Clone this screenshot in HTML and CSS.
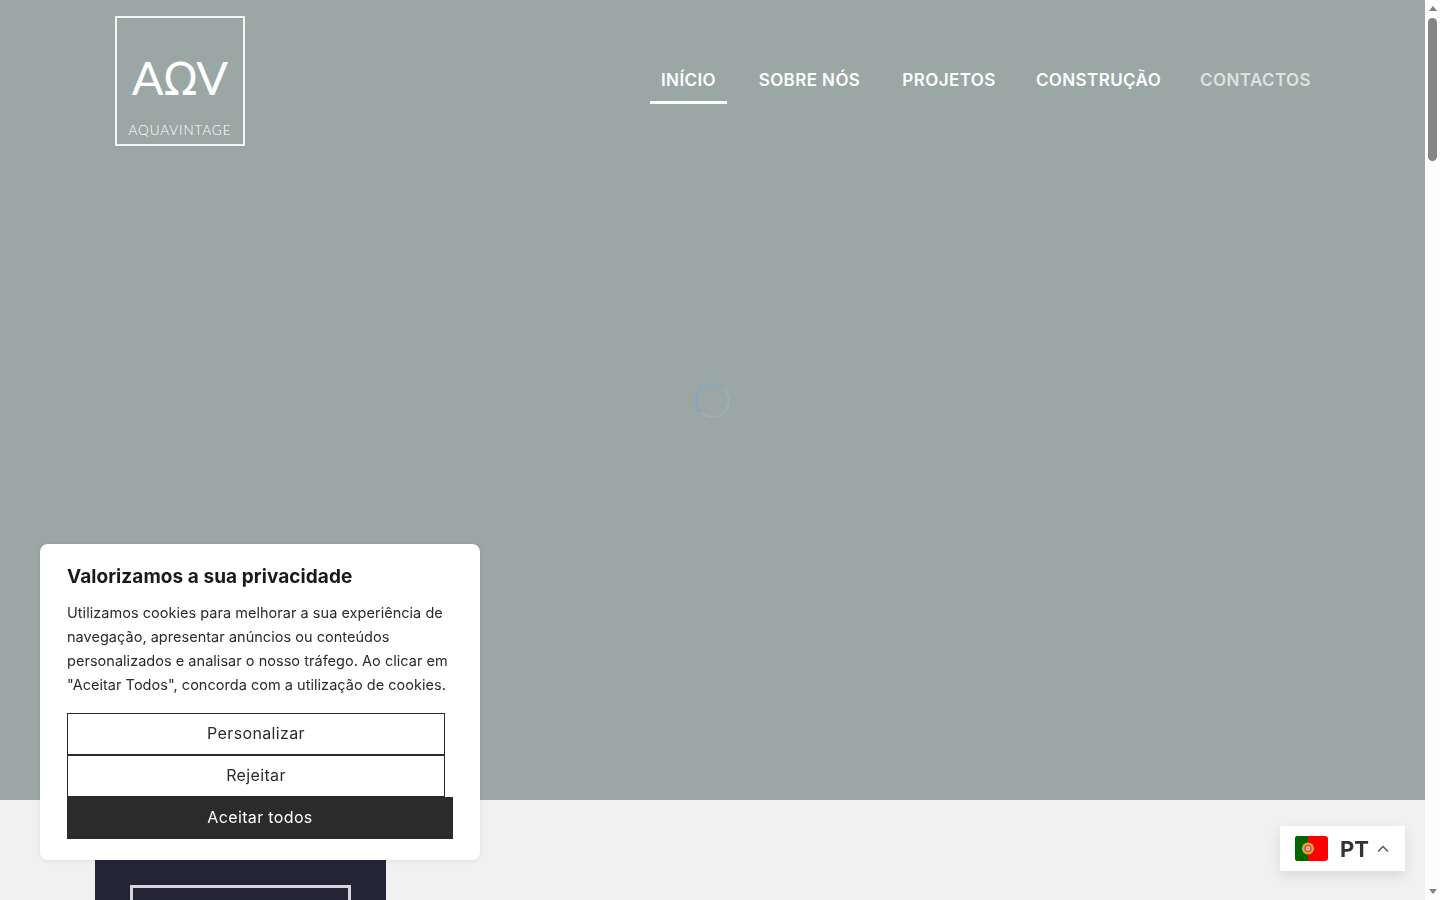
FILE: index.html
```html
<!DOCTYPE html>
<html lang="pt-PT">
<head>
  <meta charset="UTF-8"/>
  <meta name="viewport" content="width=device-width,initial-scale=1"/>
  <title>Aquavintage</title>
  <link rel="stylesheet" href="styles.css">
</head>
<body>
  <div class="page">
    <main class="content">
      <section class="hero">
        <header class="topbar">
          <a class="logo" href="#">
            <span class="logo-mark">A<span class="logo-q">Ω</span>V</span>
            <span class="logo-name">AQUAVINTAGE</span>
          </a>
          <nav class="menu">
            <a class="active" href="#">INÍCIO</a>
            <a href="#">SOBRE NÓS</a>
            <a href="#">PROJETOS</a>
            <a href="#">CONSTRUÇÃO</a>
            <a class="dim" href="#">CONTACTOS</a>
          </nav>
        </header>
        <div class="hero-center">
          <div class="spinner"></div>
        </div>
      </section>
      <section class="below">
        <div class="thumb"><div class="thumb-frame"></div></div>
      </section>
    </main>

    <!-- barra de scroll -->
    <aside class="scrollbar">
      <span class="arrow up"></span>
      <span class="thumb-bar"></span>
      <span class="arrow down"></span>
    </aside>
  </div>

  <div class="cookies">
    <h2>Valorizamos a sua privacidade</h2>
    <p>Utilizamos cookies para melhorar a sua experiência de navegação, apresentar anúncios ou conteúdos personalizados e analisar o nosso tráfego. Ao clicar em "Aceitar Todos", concorda com a utilização de cookies.</p>
    <div class="cookie-btns">
      <button class="btn">Personalizar</button>
      <button class="btn">Rejeitar</button>
      <button class="btn accept">Aceitar todos</button>
    </div>
  </div>

  <div class="lang">
    <svg class="flag" width="33" height="25" viewBox="0 0 33 25">
      <defs><clipPath id="flagclip"><rect width="33" height="25" rx="3"/></clipPath></defs>
      <g clip-path="url(#flagclip)">
        <rect width="33" height="25" fill="#ff0000"/>
        <rect width="13" height="25" fill="#006600"/>
        <circle cx="13" cy="12.5" r="6" fill="#d9b030"/>
        <circle cx="13" cy="12.5" r="3.8" fill="#d8503a"/>
        <rect x="11.3" y="10.4" width="3.4" height="4.2" rx="1" fill="#f0f0f0"/>
        <rect x="12.4" y="11.4" width="1.2" height="2.2" fill="#4a6ea8"/>
      </g>
    </svg>
    <span class="lang-code">PT</span>
    <svg class="chev" width="12" height="8" viewBox="0 0 12 8"><path d="M1 6.5 6 1.5l5 5" fill="none" stroke="#555" stroke-width="1.4"/></svg>
  </div>
</body>
</html>
```

FILE: styles.css
```css
* { box-sizing: border-box; margin: 0; padding: 0 }
html, body { height: 100%; overflow: hidden }
body {
  background: #f1f1f1;
  font-family: Inter, "Open Sans", sans-serif;
  color: #2a2b2a;
}
.page { display: flex; height: 900px }
.content { flex: 1; min-width: 0; overflow: hidden }

/* hero */
.hero {
  height: 800px;
  background: #9aa7a4;
  display: flex;
  flex-direction: column;
}
.topbar {
  display: flex;
  justify-content: space-between;
  padding: 16px 115px 0;
  height: 146px;
}
.logo {
  width: 130px;
  height: 130px;
  border: 2px solid #f4f6f5;
  color: #fff;
  text-decoration: none;
  display: flex;
  flex-direction: column;
  align-items: center;
}
.logo-mark {
  font-family: Lato, sans-serif;
  font-weight: 400;
  font-size: 47px;
  line-height: 44px;
  height: 44px;
  margin-top: 37px;
  white-space: nowrap;
}
.logo-q {
  font-family: "DejaVu Sans", sans-serif;
  font-size: 44px;
  line-height: 1;
  letter-spacing: -1px;
}
.logo-name {
  font-family: Lato, sans-serif;
  font-weight: 300;
  font-size: 13.5px;
  line-height: 16px;
  letter-spacing: 0.9px;
  margin-top: 23px;
}
.menu {
  display: grid;
  grid-template-columns: 57px 105px 94px 125px 109px;
  grid-template-rows: 48px;
  gap: 40px;
  margin-top: 40px;
  height: 48px;
}
.menu a {
  height: 48px;
  color: #fff;
  text-decoration: none;
  font-size: 17px;
  font-weight: 600;
  letter-spacing: 0.4px;
  line-height: 48px;
  text-align: center;
  white-space: nowrap;
  margin: 0 -10px;
}
.menu a.active { border-bottom: 3px solid #fff }
.menu a.dim { color: #dde2e1 }
.hero-center {
  flex: 1;
  display: flex;
  justify-content: center;
  padding-top: 237px;
}
.spinner {
  width: 35px;
  height: 35px;
  border-radius: 50%;
  border: 2px solid #a0aeb0;
  border-top-color: #8aa9c2;
  border-left-color: #80a6c8;
  filter: blur(0.5px);
}

/* abaixo do hero */
.below { padding: 60px 0 0 95px }
.thumb {
  width: 291px;
  height: 60px;
  background: #252437;
  padding: 25px 35px 0;
}
.thumb-frame {
  width: 221px;
  height: 40px;
  border: 3px solid #d6d6dc;
}

/* scrollbar */
.scrollbar {
  width: 15px;
  background: #fdfdfd;
  position: relative;
  display: flex;
  flex-direction: column;
  align-items: center;
}
.thumb-bar {
  width: 9px;
  height: 143px;
  margin-top: 18px;
  border-radius: 5px;
  background: #858585;
}
.arrow {
  position: absolute;
  width: 0;
  height: 0;
  border-left: 4px solid transparent;
  border-right: 4px solid transparent;
}
.arrow.up { top: 6px; border-bottom: 5px solid #808080 }
.arrow.down { bottom: 6px; border-top: 5px solid #808080 }

/* cookies */
.cookies {
  position: fixed;
  left: 40px;
  top: 544px;
  width: 440px;
  height: 316px;
  background: #fff;
  border-radius: 8px;
  padding: 22px 27px;
  box-shadow: 0 1px 4px rgba(0,0,0,0.08);
}
.cookies h2 {
  font-size: 19px;
  font-weight: 700;
  letter-spacing: 0.07px;
  line-height: 22px;
  color: #1a1a1a;
}
.cookies p {
  font-size: 14.5px;
  letter-spacing: 0.03px;
  line-height: 24px;
  margin-top: 13px;
  color: #2a2b2a;
}
.cookie-btns { margin-top: 16px; display: flex; flex-direction: column }
.btn {
  width: 378px;
  height: 42px;
  padding-bottom: 2px;
  background: #fff;
  border: 1px solid #2a2b2a;
  border-radius: 0;
  font-family: inherit;
  font-size: 16px;
  letter-spacing: 0.35px;
  color: #2a2b2a;
}
.btn.accept {
  width: 386px;
  background: #2a2b2a;
  color: #fff;
}

/* idioma */
.lang {
  position: fixed;
  left: 1280px;
  top: 826px;
  width: 125px;
  height: 45px;
  background: #fff;
  display: flex;
  align-items: center;
  padding-left: 15px;
  box-shadow: 0 5px 12px rgba(0,0,0,0.1);
}
.lang-code {
  font-weight: 700;
  font-size: 22px;
  margin-left: 12px;
  color: #333;
}
.chev { margin-left: 8px }
```
